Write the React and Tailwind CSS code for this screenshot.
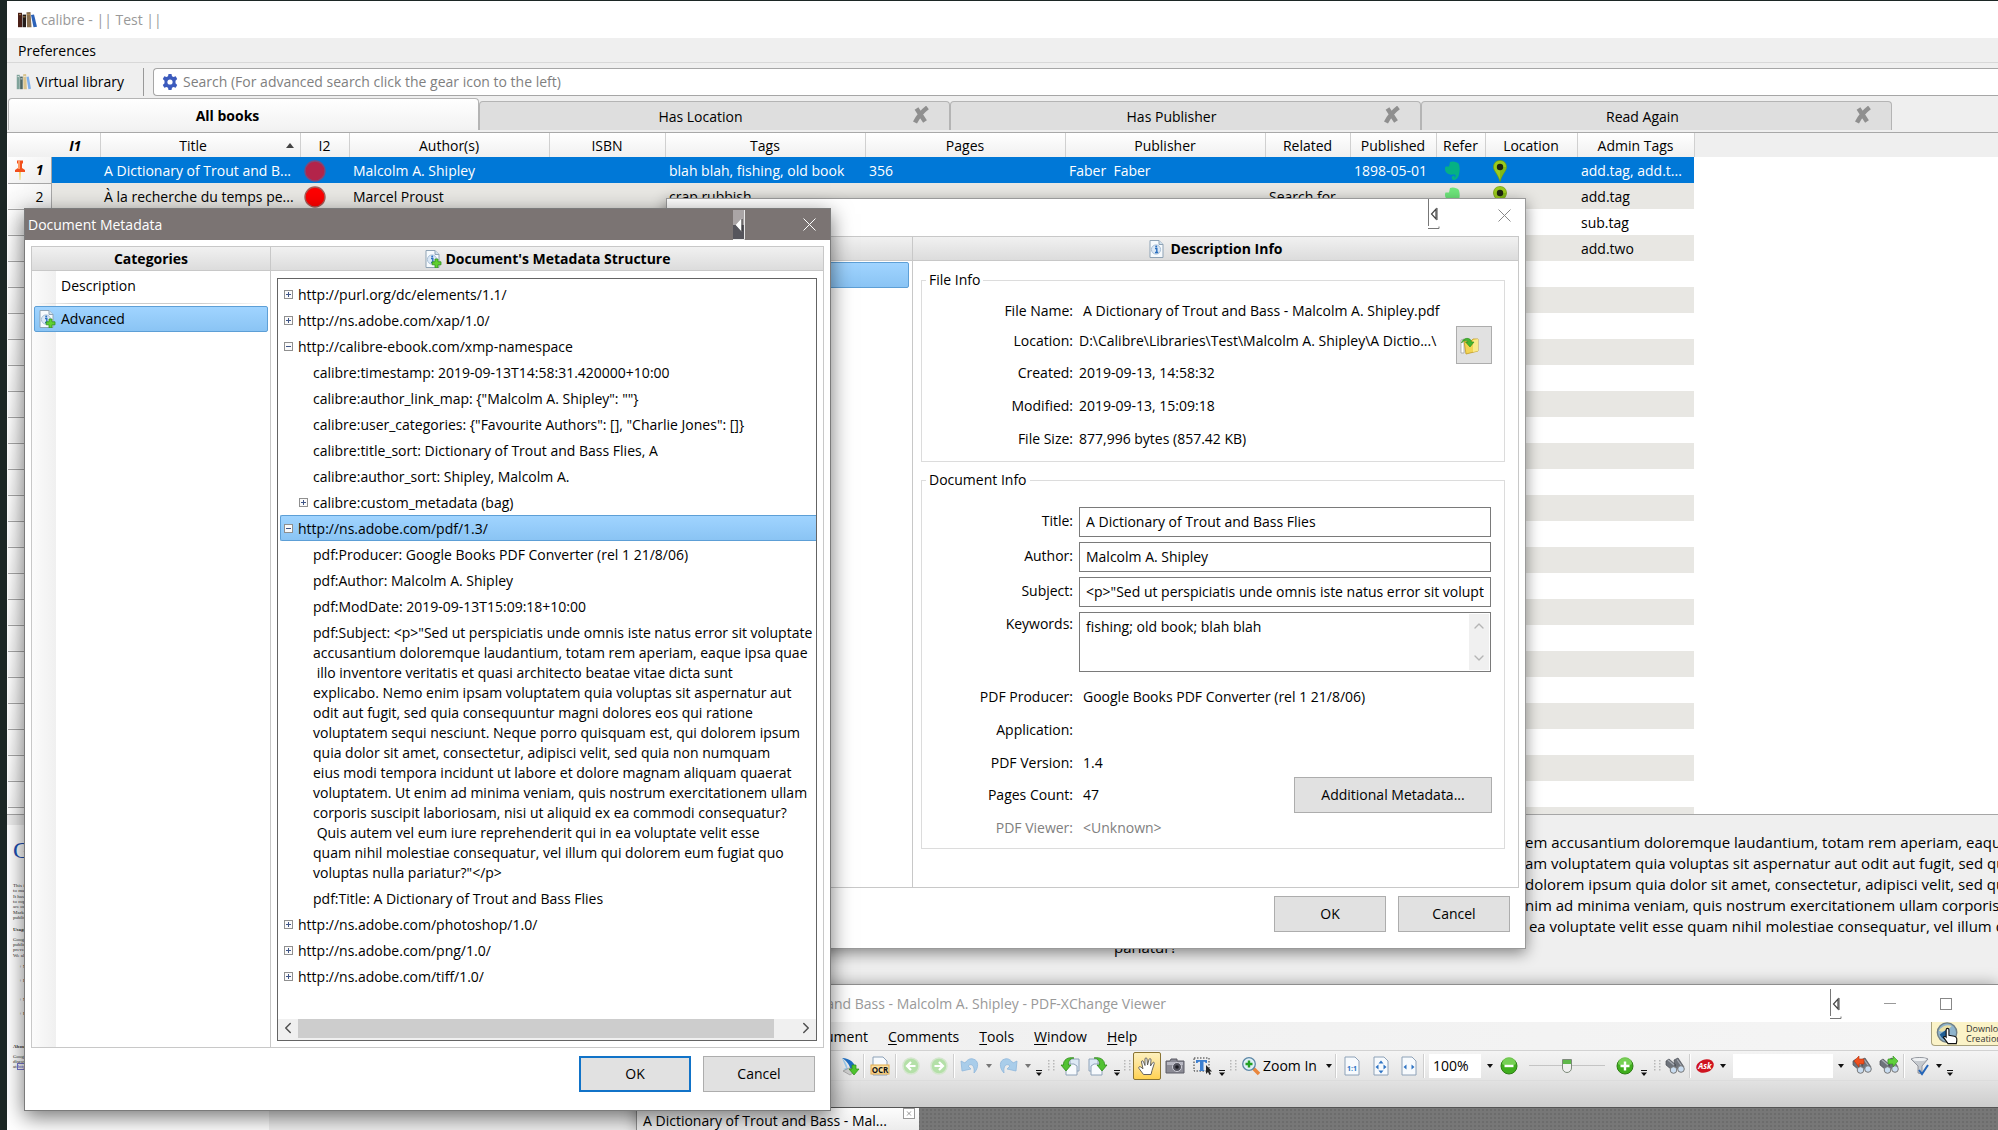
import React, { useState } from 'react'
import clsx from 'clsx'
import { ChevronLeft, ChevronRight, ChevronUp, ChevronDown } from 'lucide-react'

const COLUMNS = [
  { key: 'i2', label: 'I2', width: 49 },
  { key: 'authors', label: 'Author(s)', width: 200 },
  { key: 'isbn', label: 'ISBN', width: 116 },
  { key: 'tags', label: 'Tags', width: 200 },
  { key: 'pages', label: 'Pages', width: 200 },
  { key: 'publisher', label: 'Publisher', width: 200 },
  { key: 'related', label: 'Related', width: 85 },
  { key: 'published', label: 'Published', width: 86 },
  { key: 'refer', label: 'Refer', width: 49 },
  { key: 'location', label: 'Location', width: 92 },
  { key: 'admin', label: 'Admin Tags', width: 117 },
]

const BOOKS = [
  {
    title: 'A Dictionary of Trout and B...',
    i2: <Dot dim />,
    authors: 'Malcolm A. Shipley',
    tags: 'blah blah, fishing, old book',
    pages: '356',
    publisher: 'Faber  Faber',
    published: '1898-05-01',
    refer: <Elephant color="#05b184" />,
    location: <Pin />,
    admin: 'add.tag, add.t...',
  },
  {
    title: 'À la recherche du temps pe...',
    i2: <Dot />,
    authors: 'Marcel Proust',
    tags: 'crap,rubbish',
    related: 'Search for',
    refer: <Elephant color="#6fe87c" />,
    location: <Pin />,
    admin: 'add.tag',
  },
  { admin: 'sub.tag' },
  { admin: 'add.two' },
  ...Array.from({ length: 22 }, () => ({})),
]

const TREE = [
  { text: 'http://purl.org/dc/elements/1.1/', box: '+' },
  { text: 'http://ns.adobe.com/xap/1.0/', box: '+' },
  { text: 'http://calibre-ebook.com/xmp-namespace', box: '-' },
  { text: 'calibre:timestamp: 2019-09-13T14:58:31.420000+10:00', child: true },
  { text: 'calibre:author_link_map: {"Malcolm A. Shipley": ""}', child: true },
  { text: 'calibre:user_categories: {"Favourite Authors": [], "Charlie Jones": []}', child: true },
  { text: 'calibre:title_sort: Dictionary of Trout and Bass Flies, A', child: true },
  { text: 'calibre:author_sort: Shipley, Malcolm A.', child: true },
  { text: 'calibre:custom_metadata (bag)', child: true, box: '+' },
  { text: 'http://ns.adobe.com/pdf/1.3/', box: '-' },
  { text: 'pdf:Producer: Google Books PDF Converter (rel 1 21/8/06)', child: true },
  { text: 'pdf:Author: Malcolm A. Shipley', child: true },
  { text: 'pdf:ModDate: 2019-09-13T15:09:18+10:00', child: true },
  {
    child: true,
    text: [
      'pdf:Subject: <p>"Sed ut perspiciatis unde omnis iste natus error sit voluptate',
      'accusantium doloremque laudantium, totam rem aperiam, eaque ipsa quae',
      ' illo inventore veritatis et quasi architecto beatae vitae dicta sunt',
      'explicabo. Nemo enim ipsam voluptatem quia voluptas sit aspernatur aut',
      'odit aut fugit, sed quia consequuntur magni dolores eos qui ratione',
      'voluptatem sequi nesciunt. Neque porro quisquam est, qui dolorem ipsum',
      'quia dolor sit amet, consectetur, adipisci velit, sed quia non numquam',
      'eius modi tempora incidunt ut labore et dolore magnam aliquam quaerat',
      'voluptatem. Ut enim ad minima veniam, quis nostrum exercitationem ullam',
      'corporis suscipit laboriosam, nisi ut aliquid ex ea commodi consequatur?',
      ' Quis autem vel eum iure reprehenderit qui in ea voluptate velit esse',
      'quam nihil molestiae consequatur, vel illum qui dolorem eum fugiat quo',
      'voluptas nulla pariatur?"</p>',
    ].join('\n'),
  },
  { text: 'pdf:Title: A Dictionary of Trout and Bass Flies', child: true },
  { text: 'http://ns.adobe.com/photoshop/1.0/', box: '+' },
  { text: 'http://ns.adobe.com/png/1.0/', box: '+' },
  { text: 'http://ns.adobe.com/tiff/1.0/', box: '+' },
]

// [text ending at the fold, text after it]
const COMMENT_LINES = [
  ['error sit voluptat', 'em accusantium doloremque laudantium, totam rem aperiam, eaque ipsa'],
  ['Nemo enim ips', 'am voluptatem quia voluptas sit aspernatur aut odit aut fugit, sed quia'],
  ['est, qui ', 'dolorem ipsum quia dolor sit amet, consectetur, adipisci velit, sed quia'],
  ['Ut e', 'nim ad minima veniam, quis nostrum exercitationem ullam corporis'],
  ['reprehenderit qui in', ' ea voluptate velit esse quam nihil molestiae consequatur, vel illum qui'],
]

/* ---------- icons ---------- */

function Dot({ dim }) {
  return (
    <svg viewBox="0 0 22 22" className="h-[22px] w-[22px]">
      <circle cx="11" cy="11" r="10" fill={dim ? '#b3244a' : '#fe0000'} stroke={dim ? '#7a4a7c' : '#a85a55'} strokeWidth="1.4" />
    </svg>
  )
}

function Elephant({ color }) {
  return (
    <svg viewBox="-3 0 20 20" className="h-5 w-[22px]">
      <path d="M6 1c3-1.500 7 0 8.500 1.500 1.500 3 1.500 7 .5 11-1 4-3 5.500-5.500 5.500-2.500-1-2.500-4.500 1-4.500v2c2-1 1-3 0-3-2 0-4 .8-6-.5C2 12 0 9 1.500 5.500H5z" fill={color} />
    </svg>
  )
}

function Pin() {
  return (
    <svg viewBox="-4 0 22 22" className="h-[22px] w-[22px]">
      <path d="M7 .5C3 .5.5 3.300.5 7 .5 11 5 14 7 21.500 9 14 13.500 11 13.500 7 13.500 3.300 11 .5 7 .5z" fill="#9ccb1c" stroke="#6f9a10" strokeWidth=".7" />
      <path d="M7 21C9 14 13 11 13 7H7z" fill="#6fae12" opacity=".6" />
      <circle cx="7" cy="7" r="3.200" fill="#1f2610" />
    </svg>
  )
}

function PushPin() {
  return (
    <svg viewBox="0 0 12 20" className="h-5 w-3">
      <path d="M5 12h2l-.6 8h-.8z" fill="#f3d76a" />
      <path d="M3 .5h6V3L8 4v4l3 2v2H1v-2l3-2V4L3 3z" fill="#f2501c" />
      <path d="M4 1h2v8H4z" fill="#ff9a63" />
    </svg>
  )
}

function Books({ light }) {
  return (
    <svg viewBox="0 0 20 20" className={light ? 'h-[18px] w-[15px]' : 'h-[18px] w-5'} preserveAspectRatio="none">
      <path d="M1 2h4v16H1z" fill={light ? '#7fa39b' : '#4a2018'} />
      <path d="M5.500 4h3.500v14H5.500z" fill={light ? '#4d6663' : '#241c1a'} />
      <path d="M9.500 1.500l4-.5 1 17H10z" fill={light ? '#d9c48e' : '#8b7150'} />
      <path d="M14 4.500l3-.5 3 13.500-3.500.5z" fill={light ? '#7fb0ec' : '#2c62b8'} />
      <path d="M2 4h2M6 6.500h2.500M10 4h3" stroke={light ? '#eee' : '#b08a4c'} strokeWidth="1" />
    </svg>
  )
}

function Gear() {
  return (
    <svg viewBox="0 0 16 16" className="h-4 w-4">
      <path d="M6.500 0h3l.5 2.200 1.500.8 2.200-.8L15.200 5l-1.700 1.700v2.600l1.700 1.700-1.500 2.800-2.200-.8-1.500.8-.5 2.200h-3L6 13.800 4.500 13l-2.200.8L.8 11l1.700-1.700V6.700L.8 5l1.500-2.800 2.200.8L6 2.200z" fill="#3c5bbd" />
      <circle cx="8" cy="8" r="2.600" fill="#fff" />
    </svg>
  )
}

function InfoDoc({ plus }) {
  return (
    <svg viewBox="0 0 18 18" className="h-[18px] w-[18px] shrink-0">
      <path d="M2 .5h9L15 4.500v13H2z" fill="#f6fafd" stroke="#8fa3b5" />
      <path d="M11 .5v4h4" fill="#cfe0ee" stroke="#8fa3b5" />
      <circle cx="8" cy="9.500" r="4.600" fill="#dbe8f5" stroke="#a9bfd6" />
      <path d="M7 8.500h1.800v4M7 12.500h3.200" stroke="#2a6fc0" strokeWidth="1.400" fill="none" />
      <circle cx="8.200" cy="6.600" r="1" fill="#2a6fc0" />
      {plus && <path d="M11 9h3v2.800h3v3h-3v3h-3v-3H8.200v-3H11z" fill="#5fd02f" stroke="#2f8f1c" strokeWidth=".8" />}
    </svg>
  )
}

function TabCross() {
  return (
    <svg viewBox="0 0 18 18" className="h-[18px] w-[18px]" fill="none" stroke="#8f8f8f" strokeWidth="4.500">
      <path d="M4.500 2.500l8.500 13M15.500 1.500Q8 7 3 16.500" />
    </svg>
  )
}

function Cross({ className }) {
  return (
    <svg viewBox="0 0 13 13" className={clsx('h-[13px] w-[13px]', className)}>
      <path d="M.5.5l12 12M12.500.5l-12 12" stroke="currentColor" fill="none" />
    </svg>
  )
}

function SideHandle({ dark }) {
  return (
    <svg viewBox="0 0 12 30" className="h-[30px] w-3">
      {dark && <path d="M0 0h12v15H0z" fill="#aaa5a6" />}
      {dark && <path d="M0 15h12v15H0z" fill="#56555c" />}
      {dark ? (
        <path d="M11.500 0v29.500H0" stroke="#e8e8e8" fill="none" />
      ) : (
        <path d="M.5 0v27M0 29.500h11v-2" stroke="#777" fill="none" />
      )}
      <path d="M8 10v10l-4.500-5z" fill={dark ? '#fff' : 'none'} stroke={dark ? '#fff' : '#444'} strokeWidth="1.200" />
      <path d="M9 9v12" stroke={dark ? '#333' : '#444'} />
    </svg>
  )
}

function FolderUp() {
  return (
    <svg viewBox="0 0 20 20" className="h-5 w-5">
      <path d="M1 5l3-1v14H1z" fill="#fff" stroke="#999" strokeWidth=".7" />
      <path d="M4 6h7l2-2h5v12l-12 3z" fill="#f3d453" stroke="#c09a22" strokeWidth=".8" />
      <path d="M13 5l5-1v12l-5 1z" fill="#faea8a" />
      <path d="M1.500 8C3 2 11 2 11.500 7H14l-4 5-4.500-5H8C7 5 4 5 1.500 8z" fill="#45b52f" stroke="#2a8a1c" strokeWidth=".6" />
    </svg>
  )
}

function Tool({ children }) {
  return (
    <svg viewBox="0 0 20 20" className="h-5 w-5 shrink-0" fill="none">
      {children}
    </svg>
  )
}

const ScanIcon = () => (
  <Tool>
    <path d="M2 2c8 0 13 5 14 11l-5 3C10 9 7 5 2 2z" fill="#1f6fc4" />
    <path d="M2 2c3 3 6 8 6 13l-5-2 3-1z" fill="#9ccdf0" />
    <path d="M3 15l6-3 8 2-7 5z" fill="#cfcfcf" stroke="#888" strokeWidth=".6" />
    <path d="M12 9h4v4h3l-5 6-5-6h3z" fill="#4fc52e" stroke="#2b8d18" strokeWidth=".7" />
  </Tool>
)

const PageShape = () => <path d="M3 1h10l4 4v14H3z" fill="#f7fafd" stroke="#8ea2b8" />

const OcrIcon = () => (
  <Tool>
    <PageShape />
    <rect x="1" y="9" width="18" height="9" fill="#fbdfa0" stroke="#e0a94a" />
    <text x="10" y="16.500" fontSize="8" fontWeight="700" textAnchor="middle" fill="#111">OCR</text>
  </Tool>
)

const RoundArrow = ({ flip }) => (
  <Tool>
    <g transform={flip ? 'matrix(-1 0 0 1 20 0)' : undefined}>
      <circle cx="10" cy="10" r="8" fill="#b4e0a8" stroke="#d4e6ce" strokeWidth="1.500" />
      <path d="M14.500 10H6.500M10 6l-4 4 4 4" stroke="#fff" strokeWidth="2.200" />
    </g>
  </Tool>
)

const CurlArrow = ({ flip }) => (
  <Tool>
    <g transform={flip ? 'matrix(-1 0 0 1 20 0)' : undefined}>
      <path d="M1 5l1 10 9-2-3-3c3-3 7-1 6 7 5-5 5-13-1-14C10 2 7 4 5 7z" fill="#a9cdea" stroke="#8fb8dc" strokeWidth=".8" />
    </g>
  </Tool>
)

const RotateIcon = ({ flip }) => (
  <Tool>
    <g transform={flip ? 'matrix(-1 0 0 1 20 0)' : undefined}>
      <path d="M10 3h9v12h-9z" fill="#dde9f5" stroke="#8ea2b8" />
      <path d="M6 8h8l3 2v9H6z" fill="#f7fafd" stroke="#8ea2b8" />
      <path d="M1 9h2.500C3 4 8 .5 14 2c-4 .5-6 3-5.500 7H11l-5 6z" fill="#52c232" stroke="#2d8a19" strokeWidth=".8" />
    </g>
  </Tool>
)

const HandShape = () => (
  <path d="M6.500 18.500L2 12.500c-1-1.500.8-2.400 1.800-1.500L6 12.800 4.500 6c-.2-1.500 1.600-1.700 2-.3L8 9.500V3c0-1.500 2-1.500 2 0l.5 6L12 3.500c.4-1.400 2.200-1 2 .5L13.500 10l2-3.200c.8-1.200 2.200-.4 1.700.9L15 14.500l-1 4z" fill="#fff" stroke="#555" strokeWidth=".9" />
)

const CameraIcon = () => (
  <Tool>
    <path d="M1 5h4l1-2h6v2h7v12H1z" fill="#8b8b95" stroke="#5d5d66" />
    <path d="M2 6h16v3H2z" fill="#b8b8c2" />
    <circle cx="12" cy="11" r="4.500" fill="#55555f" stroke="#d0d0d8" />
    <circle cx="12" cy="11" r="1.800" fill="#1c1c22" />
  </Tool>
)

const TextSelectIcon = () => (
  <Tool>
    <path d="M1 2h15v13H1z" stroke="#333" strokeDasharray="1.500 1.500" />
    <path d="M3 4h11v3h-1.500c0-1-.5-1.300-2-1.300V14l1.500 1H6l1-1V5.700c-1.500 0-2 .3-2.500 1.300H3z" fill="#3c7fd0" />
    <path d="M13 9v9l2-2 1.500 3 1.500-1-1.500-2.500H19z" fill="#222" />
  </Tool>
)

const MagnifierIcon = () => (
  <Tool>
    <path d="M12 12l6 6" stroke="#e9863c" strokeWidth="3.500" />
    <circle cx="8" cy="8" r="6.300" fill="#dff0f7" stroke="#5c87a6" strokeWidth="1.300" />
    <path d="M8 4.500v7M4.500 8h7" stroke="#22a024" strokeWidth="2.400" />
  </Tool>
)

const FitIcon = ({ kind }) => (
  <Tool>
    <PageShape />
    {kind === 'actual' ? (
      <text x="10" y="15" fontSize="7" fontWeight="700" textAnchor="middle" fill="#2f74c4">1:1</text>
    ) : (
      <path d="M7.500 8.500v5l-3-2.500zM12.500 8.500v5l3-2.500z" fill="#2f74c4" />
    )}
    {kind === 'page' && <path d="M7.500 7.500h5L10 4.500zM7.500 14.500h5l-2.500 3z" fill="#2f74c4" />}
  </Tool>
)

const Ball = ({ plus }) => (
  <Tool>
    <circle cx="10" cy="10" r="8" fill="#3fae1d" stroke="#2c7d14" />
    <path d="M3 8a7 7 0 0114 0c-4 2-10 2-14 0z" fill="#8ee06c" opacity=".7" />
    <path d={plus ? 'M10 5.500v9M5.500 10h9' : 'M5.500 10h9'} stroke="#fff" strokeWidth="2.400" />
  </Tool>
)

const Binoculars = ({ arrow }) => (
  <Tool>
    <path d="M1 5l3-2 7 6-4 5-6-5zM9 4l4-2 6 9-4 4-5-5z" fill="#6e737b" stroke="#4a4e55" strokeWidth=".7" />
    <path d="M3 4l6 5M12 3.500l5 7" stroke="#a9aeb6" strokeWidth="1.200" />
    <circle cx="8.500" cy="14" r="3.300" fill="#c9dcf0" stroke="#777" />
    <circle cx="16" cy="13" r="3.300" fill="#c9dcf0" stroke="#777" />
    {arrow === 'back' && <path d="M2 5l5-5v3h5v5H7v3z" fill="#f0501e" stroke="#b3310c" strokeWidth=".6" />}
    {arrow === 'next' && <path d="M19 5l-5-5v3H9v5h5v3z" fill="#5fd03c" stroke="#2f8f1c" strokeWidth=".6" />}
  </Tool>
)

const AskIcon = () => (
  <Tool>
    <ellipse cx="10" cy="10" rx="9" ry="6.500" fill="#cf1420" transform="rotate(-20 10 10)" />
    <text x="10" y="13" fontSize="8" fontWeight="700" fontStyle="italic" textAnchor="middle" fill="#fff">Ask</text>
  </Tool>
)

const FunnelIcon = () => (
  <Tool>
    <path d="M1 3c4-2 13-2 17 0l-6 7v8l-4-1v-7z" fill="#c5c9ce" stroke="#7d828a" strokeWidth=".8" />
    <ellipse cx="9.500" cy="3.500" rx="7" ry="1.600" fill="#eef0f2" />
    <path d="M9 14l3 4 6-9" stroke="#2465b8" strokeWidth="2" />
  </Tool>
)

/* ---------- small shared parts ---------- */

function DialogButton({ primary, children }) {
  return (
    <button
      type="button"
      className={clsx(
        'h-9 w-28 bg-[#e1e1e1] text-sm',
        primary ? 'border-2 border-[#1173c8]' : 'border border-[#adadad]'
      )}
    >
      {children}
    </button>
  )
}

function PaneHeader({ className, children }) {
  return (
    <div className={clsx('flex h-6 shrink-0 items-center justify-center gap-1 border-b border-[#c8c8c8] bg-linear-to-b from-[#f1f1f1] to-[#dcdcdc] text-sm font-bold', className)}>
      {children}
    </div>
  )
}

/* ---------- calibre main window ---------- */

function LibraryTabs() {
  const [active, setActive] = useState('All books')
  return (
    <div className="flex h-[34px] items-end border-b border-[#a8a8a8] pb-[2px] pl-px">
      {['All books', 'Has Location', 'Has Publisher', 'Read Again'].map(name => (
        <div
          key={name}
          className={clsx(
            'flex w-[471px] shrink-0 items-center rounded-t-sm border border-b-0 border-[#b4b4b4] pt-[2px] pl-4',
            name === active ? 'h-8 bg-linear-to-b from-white to-[#f2f2f2] pr-12 font-bold' : 'h-[29px] bg-[#dedede] pr-3'
          )}
        >
          <button type="button" className="flex-1" onClick={() => setActive(name)}>{name}</button>
          {name !== active && (
            <button type="button" aria-label={`Close ${name}`} className="flex w-8 justify-center pb-1"><TabCross /></button>
          )}
        </div>
      ))}
    </div>
  )
}

function BookTable() {
  return (
    <table className="w-[1686px] table-fixed border-collapse">
      <colgroup>
        <col className="w-[43px]" />
        <col className="w-[49px]" />
        <col className="w-[200px]" />
        {COLUMNS.map(c => <col key={c.key} style={{ width: c.width }} />)}
      </colgroup>
      <thead>
        <tr className="h-6 bg-linear-to-b from-white to-[#f0f0f0] [&>th]:p-0 [&>th]:pt-px [&>th]:font-normal">
          <th />
          <th className="border-r border-[#d0d0d0]"><span className="font-bold italic">I1</span></th>
          <th className="border-r border-[#d0d0d0]">
            <div className="flex items-center pr-1.5">
              <span className="flex-1">Title</span>
              <svg viewBox="0 0 8 5" className="h-[5px] w-2"><path d="M0 5l4-5 4 5z" fill="#444" /></svg>
            </div>
          </th>
          {COLUMNS.map(c => <th key={c.key} className="border-r border-[#d0d0d0]">{c.label}</th>)}
        </tr>
      </thead>
      <tbody>
        {BOOKS.map((book, i) => (
          <tr
            key={i}
            className={clsx(
              'h-[26px] whitespace-pre [&>td]:overflow-hidden [&>td]:p-0 [&>td]:pt-px [&>td]:pl-1',
              i === 0 ? 'bg-[#0078d7] text-white' : i % 2 ? 'bg-[#e8e7e3]' : 'bg-white'
            )}
          >
            <th className="border-r border-b border-[#a6a6a6] bg-linear-to-br from-white to-[#ececec] p-0 font-normal text-black">
              <div className="flex h-[25px] items-center justify-between pt-px pr-[7px] pl-1.5">
                <span>{i === 0 && <PushPin />}</span>
                {i < 2 && <span className={i === 0 ? 'font-bold italic' : ''}>{i + 1}</span>}
              </div>
            </th>
            <td />
            <td>{book.title}</td>
            {COLUMNS.map(c => <td key={c.key}>{book[c.key]}</td>)}
          </tr>
        ))}
      </tbody>
    </table>
  )
}

function CoverPage() {
  return (
    <div className="w-[262px] shrink-0 bg-[#ececec] pt-[10px]">
      <div className="h-full bg-white pt-4 pl-1.5 font-[Liberation_Serif,serif] text-[5px] leading-[5px] whitespace-pre text-[#333]">
        <div className="pb-6 text-[24px] leading-[18px] text-[#1d4fb0]">Google</div>
        <p>{'This is a digital copy of a book\nto make the world’s books'}</p>
        <p className="pt-px">{'It has survived long enough\nto copyright or whose legal\nare our gateways to the past'}</p>
        <p className="pt-px">{'Marks, notations and other\npublisher to a library'}</p>
        <p className="pt-[7px] font-bold">Usage guidelines</p>
        <p className="pt-[5px]">{'Google is proud to partner\npublic and we are merely\nprevent abuse by commercial'}</p>
        <p className="pt-px">We also ask that you:</p>
        <ul className="space-y-[9px] pt-[6px] pl-1.5">
          <li>+ Make non-commercial use</li>
          <li>+ Refrain from automated</li>
          <li className="pt-[5px]">+ Maintain attribution</li>
          <li>+ Keep it legal</li>
        </ul>
        <p className="pt-7 font-bold">About Google Book Search</p>
        <p className="pt-[5px]">{'Google’s mission is to organize\ndiscover the world’s books\nat '}<a href="#books" className="outline outline-[#7a78d0] text-[#4a48c0]">http://books.google.com/</a></p>
      </div>
    </div>
  )
}

function CommentsPane() {
  return (
    <div className="min-w-0 flex-1 overflow-hidden bg-[#efefef] pt-[17px] pl-[845px] text-[15px] leading-[21px] whitespace-pre">
      {COMMENT_LINES.map(([before, after]) => (
        <div key={after} className="flex">
          <span className="w-[411px] shrink-0 text-right">{before}</span>
          <span>{after}</span>
        </div>
      ))}
      <div>pariatur?</div>
    </div>
  )
}

function CalibreWindow() {
  return (
    <section className="absolute inset-0 top-px left-[7px] flex flex-col overflow-hidden bg-[#efefef]">
      <header className="flex h-[37px] shrink-0 items-center gap-1 bg-white pl-2.5 text-[#999]">
        <Books />
        <span>calibre - || Test ||</span>
      </header>
      <nav className="flex h-[25px] shrink-0 items-center border-b border-[#d8d8d8] pt-[2px] pl-[11px]">
        <button type="button">Preferences</button>
      </nav>
      <div className="flex h-9 shrink-0 items-center pt-px pl-[9px]">
        <button type="button" className="flex w-[127px] items-center gap-[5px]"><Books light />Virtual library</button>
        <div className="h-7 w-[10px] border-l border-[#999]" />
        <label className="flex h-7 flex-1 items-center gap-[5px] rounded-l-sm border border-r-0 border-[#a6a6a6] bg-white pl-2">
          <Gear />
          <input
            aria-label="Search"
            placeholder="Search (For advanced search click the gear icon to the left)"
            className="flex-1 outline-none placeholder:text-[#7f7f7f]"
          />
        </label>
      </div>
      <LibraryTabs />
      <div className="min-h-0 flex-1 overflow-hidden bg-white pl-px">
        <div className="h-full bg-[linear-gradient(#efefef_24px,white_24px)]"><BookTable /></div>
      </div>
      <div className="flex h-[316px] shrink-0 border-t border-[#a6a6a6]">
        <CoverPage />
        <CommentsPane />
      </div>
    </section>
  )
}

/* ---------- PDF viewer window ---------- */

const Slot = ({ w, label, children }) => (
  <button type="button" aria-label={label} className="flex shrink-0 justify-center" style={{ width: w }}>{children}</button>
)

const Arrow = ({ w, label = 'More options', faded }) => (
  <Slot w={w} label={label}>
    <svg viewBox="0 0 6 4" className="h-1 w-1.5"><path d="M0 0h6L3 4z" fill={faded ? '#777' : '#111'} /></svg>
  </Slot>
)

const Overflow = ({ w }) => (
  <div className="flex h-5 shrink-0 items-end justify-center" style={{ width: w }}>
    <svg viewBox="0 0 6 6" className="h-1.5 w-1.5"><path d="M0 0h6v1H0zM0 2.500h6L3 6z" fill="#111" /></svg>
  </div>
)

const Grip = ({ w }) => (
  <div className="flex shrink-0 justify-center" style={{ width: w }}>
    <svg viewBox="0 0 7 12" className="h-3 w-[7px]">
      {[0, 3, 6, 9].map(y => <path key={y} d={`M0 ${y}h1.500v1.500H0zM5 ${y}h1.500v1.500H5z`} fill="#b8b8b8" />)}
    </svg>
  </div>
)

const Divider = () => <div className="h-6 w-[2px] shrink-0 border-l border-[#cfcfcf] bg-white" />

function ViewerToolbar() {
  return (
    <div className="flex h-[31px] shrink-0 items-center border-y border-[#dcdcdc] border-t-[#d2d2d2] bg-linear-to-b from-[#f4f4f4] to-[#e4e4e4] pl-[200px]">
      <Slot w={26} label="Scan"><ScanIcon /></Slot>
      <Divider />
      <Slot w={30} label="OCR"><OcrIcon /></Slot>
      <Divider />
      <Slot w={28} label="Back"><RoundArrow /></Slot>
      <Slot w={28} label="Forward"><RoundArrow flip /></Slot>
      <Divider />
      <Slot w={30} label="Undo"><CurlArrow /></Slot>
      <Arrow w={8} faded />
      <Slot w={30} label="Redo"><CurlArrow flip /></Slot>
      <Arrow w={10} faded />
      <Overflow w={12} />
      <Grip w={12} />
      <Slot w={26} label="Rotate left"><RotateIcon /></Slot>
      <Slot w={30} label="Rotate right"><RotateIcon flip /></Slot>
      <Overflow w={8} />
      <Grip w={12} />
      <button type="button" aria-label="Hand tool" className="flex h-7 w-7 shrink-0 items-center justify-center rounded-xs border border-[#8a7433] bg-linear-to-b from-[#fdf0bd] to-[#ffd24f]">
        <Tool><HandShape /></Tool>
      </button>
      <Slot w={28} label="Snapshot"><CameraIcon /></Slot>
      <Slot w={28} label="Select text"><TextSelectIcon /></Slot>
      <Overflow w={10} />
      <Grip w={12} />
      <button type="button" className="flex w-[84px] shrink-0 items-center gap-[2px] pl-[2px] whitespace-nowrap"><MagnifierIcon />Zoom In</button>
      <Arrow w={12} />
      <Divider />
      <Slot w={30} label="Actual size"><FitIcon kind="actual" /></Slot>
      <Slot w={28} label="Fit page"><FitIcon kind="page" /></Slot>
      <Slot w={28} label="Fit width"><FitIcon kind="width" /></Slot>
      <Divider />
      <input aria-label="Zoom" defaultValue="100%" className="ml-1 h-6 w-[52px] shrink-0 bg-white pl-1" />
      <Arrow w={18} />
      <Slot w={20} label="Zoom out"><Ball /></Slot>
      <input
        type="range"
        aria-label="Zoom level"
        className="mx-2.5 h-4 w-[76px] shrink-0 appearance-none bg-[linear-gradient(#c4c4c4,#c4c4c4)] bg-[length:100%_1px] bg-center bg-no-repeat [&::-webkit-slider-thumb]:h-[14px] [&::-webkit-slider-thumb]:w-[10px] [&::-webkit-slider-thumb]:appearance-none [&::-webkit-slider-thumb]:rounded-b-full [&::-webkit-slider-thumb]:border [&::-webkit-slider-thumb]:border-[#7d8a7a] [&::-webkit-slider-thumb]:bg-[linear-gradient(#5fb84a_4px,#f0f0f0_4px)]"
      />
      <Slot w={20} label="Zoom in"><Ball plus /></Slot>
      <Overflow w={18} />
      <Grip w={8} />
      <Slot w={28} label="Find"><Binoculars /></Slot>
      <Divider />
      <Slot w={28} label="Ask search"><AskIcon /></Slot>
      <Arrow w={8} />
      <input aria-label="Find text" className="ml-1.5 h-6 w-[100px] shrink-0 bg-white" />
      <Arrow w={16} />
      <Slot w={26} label="Find previous"><Binoculars arrow="back" /></Slot>
      <Slot w={28} label="Find next"><Binoculars arrow="next" /></Slot>
      <Divider />
      <Slot w={30} label="Filter"><FunnelIcon /></Slot>
      <Arrow w={8} />
      <Overflow w={14} />
    </div>
  )
}

function ViewerWindow() {
  return (
    <section className="absolute right-0 bottom-0 left-[636px] flex h-[146px] flex-col overflow-hidden border-t border-l border-[#8e8e8e] bg-[#e4e4e4] shadow-[0_0_14px_rgba(0,0,0,0.35)]">
      <header className="flex h-[37px] shrink-0 items-center bg-white text-[#999]">
        <span className="w-[529px] text-right whitespace-nowrap">A Dictionary of Trout and Bass - Malcolm A. Shipley - PDF-XChange Viewer</span>
        <div className="ml-auto flex items-center">
          <SideHandle />
          <button type="button" aria-label="Minimize" className="ml-[42px] flex h-6 w-6 items-center"><span className="h-px w-3 bg-[#999]" /></button>
          <button type="button" aria-label="Maximize" className="ml-8 h-3 w-3 border border-[#888]" />
          <span className="w-[46px]" />
        </div>
      </header>
      <nav className="flex h-7 shrink-0 items-center gap-5 bg-linear-to-r from-[#efefef] to-[#f5f5f5]">
        <button type="button" className="w-[231px] pt-px text-right"><span className="underline">D</span>ocument</button>
        {['Comments', 'Tools', 'Window', 'Help'].map(item => (
          <button key={item} type="button" className="pt-px"><span className="underline underline-offset-2">{item[0]}</span>{item.slice(1)}</button>
        ))}
        <a href="#download" className="ml-auto flex h-6 w-[67px] items-center gap-1.5 self-start overflow-hidden rounded-bl border-b border-l border-[#a9a27e] bg-[#fbf3c8] pl-1 text-[9px] leading-[10px] whitespace-nowrap text-[#333]">
          <svg viewBox="0 0 26 26" className="h-[25px] w-6 shrink-0">
            <circle cx="12" cy="12" r="10.500" fill="#8fb4cc" stroke="#6f7f86" strokeWidth="1.500" />
            <path d="M3 10c4-6 10-7 14-5l-5 5-6 1z" fill="#e9dfa6" />
            <path d="M4 14l8-6 2 12c-5 0-8-2-10-6z" fill="#1f5d93" />
            <path d="M11 9c0-2 3-2 3 0v6l6 1c3 1 3 3 2 8h-9l-5-7c1-1 2-1 3 0z" fill="#fff" stroke="#111" strokeWidth="1.200" />
          </svg>
          <span>Download<br />Creation</span>
        </a>
      </nav>
      <ViewerToolbar />
      <div className="h-[27px] shrink-0 border-b border-[#555] bg-linear-to-b from-[#e2e2e2] to-[#cdcdcd]" />
      <div className="flex flex-1 bg-[#777] bg-[radial-gradient(#6c6c6c_1px,transparent_1px)] bg-[length:4px_4px]">
        <div className="flex w-[282px] items-start bg-linear-to-b from-[#fdfdfd] to-[#ececec] pl-1.5">
          <span className="flex-1 pt-[5px] leading-4 whitespace-nowrap">A Dictionary of Trout and Bass - Mal...</span>
          <button type="button" aria-label="Close document" className="mr-1 flex h-[11px] w-3 items-center justify-center border border-[#999] bg-white text-black">
            <Cross className="scale-50" />
          </button>
        </div>
      </div>
    </section>
  )
}

/* ---------- description dialog ---------- */

function Group({ title, className, children }) {
  return (
    <fieldset className={clsx('border border-[#dcdcdc]', className)}>
      <legend className="ml-1 h-5 px-[3px] leading-5">{title}</legend>
      {children}
    </fieldset>
  )
}

function InfoRow({ label, children, className }) {
  return (
    <div className={clsx('flex items-center gap-1.5 pr-3', className)}>
      <span className="w-[151px] shrink-0 text-right">{label}</span>
      {children}
    </div>
  )
}

function TextRow({ id, label, value }) {
  return (
    <div className="flex items-start gap-1.5 pr-[13px]">
      <label htmlFor={id} className="w-[151px] shrink-0 pt-1 text-right">{label}</label>
      <input id={id} defaultValue={value} className="h-[30px] min-w-0 flex-1 border border-[#7a7a7a] bg-white px-1.5 pb-px" />
    </div>
  )
}

function DescriptionDialog() {
  return (
    <section className="absolute top-[198px] left-[666px] flex h-[751px] w-[860px] flex-col border border-[#9a9a9a] bg-white shadow-[0_4px_14px_rgba(0,0,0,0.45)]">
      <header className="flex h-[37px] shrink-0 items-start justify-end gap-[58px] pr-3.5">
        <SideHandle />
        <button type="button" aria-label="Close" className="pt-2.5 text-[#888]"><Cross /></button>
      </header>
      <div className="mx-1.5 flex flex-1 border border-[#c8c8c8]">
        <aside className="w-[239px] border-r border-[#c8c8c8]">
          <PaneHeader>Categories</PaneHeader>
          <button type="button" className="mx-[2px] mt-px block h-[26px] w-[233px] rounded-xs border border-[#5d9fd6] bg-linear-to-b from-[#a0d4ff] to-[#8ac4f4] pl-6 text-left">Description</button>
        </aside>
        <div className="flex-1">
          <PaneHeader><InfoDoc />Description Info</PaneHeader>
          <div className="space-y-2 pt-[9px] pr-[13px] pl-2">
            <Group title="File Info" className="pb-1.5">
              <div className="pt-1.5">
                <InfoRow label="File Name:" className="h-[30px]">
                  <span className="pl-1">A Dictionary of Trout and Bass - Malcolm A. Shipley.pdf</span>
                </InfoRow>
                <div className="flex h-[30px] items-start gap-1.5 pr-3 leading-[30px]">
                  <span className="w-[151px] shrink-0 text-right">Location:</span>
                  <span className="flex-1 whitespace-nowrap">D:\Calibre\Libraries\Test\Malcolm A. Shipley\A Dictio...\</span>
                  <button type="button" aria-label="Open folder" className="flex h-[38px] w-9 shrink-0 items-center justify-center border border-[#adadad] bg-[#e1e1e1] pr-2"><FolderUp /></button>
                </div>
                <InfoRow label="Created:" className="h-[33px]">2019-09-13, 14:58:32</InfoRow>
                <InfoRow label="Modified:" className="h-[33px]">2019-09-13, 15:09:18</InfoRow>
                <InfoRow label="File Size:" className="h-[33px]">877,996 bytes (857.42 KB)</InfoRow>
              </div>
            </Group>
            <Group title="Document Info" className="pb-1">
              <div className="space-y-[5px] pt-[17px] pb-2">
                <TextRow id="title" label="Title:" value="A Dictionary of Trout and Bass Flies" />
                <TextRow id="author" label="Author:" value="Malcolm A. Shipley" />
                <TextRow id="subject" label="Subject:" value={'<p>"Sed ut perspiciatis unde omnis iste natus error sit volupt'} />
                <div className="flex items-start gap-1.5 pr-[13px]">
                  <label htmlFor="keywords" className="w-[151px] shrink-0 pt-[2px] text-right">Keywords:</label>
                  <div className="flex h-[60px] flex-1 border border-[#7a7a7a] bg-white">
                    <textarea id="keywords" defaultValue="fishing; old book; blah blah" className="flex-1 resize-none overflow-hidden px-1.5 pt-1" />
                    <div className="m-px flex w-5 flex-col items-center justify-between bg-[#f0f0f0] py-1 text-[#b5b5b5]">
                      <ChevronUp size={16} />
                      <ChevronDown size={16} />
                    </div>
                  </div>
                </div>
              </div>
              <InfoRow label="PDF Producer:" className="h-[33px]"><span className="pl-1">Google Books PDF Converter (rel 1 21/8/06)</span></InfoRow>
              <InfoRow label="Application:" className="h-[33px]" />
              <InfoRow label="PDF Version:" className="h-[33px]"><span className="pl-1">1.4</span></InfoRow>
              <InfoRow label="Pages Count:" className="h-8">
                <span className="flex-1 pl-1">47</span>
                <button type="button" className="h-9 w-[198px] border border-[#adadad] bg-[#e1e1e1]">Additional Metadata...</button>
              </InfoRow>
              <InfoRow label="PDF Viewer:" className="h-[33px] text-[#808080]"><span className="pl-1">&lt;Unknown&gt;</span></InfoRow>
            </Group>
          </div>
        </div>
      </div>
      <footer className="flex h-[60px] shrink-0 justify-end gap-3 pt-2 pr-[15px]">
        <DialogButton>OK</DialogButton>
        <DialogButton>Cancel</DialogButton>
      </footer>
    </section>
  )
}

/* ---------- metadata dialog ---------- */

function Expander({ sign }) {
  return (
    <svg viewBox="0 0 9 9" className="h-[9px] w-[9px]">
      <rect x=".5" y=".5" width="8" height="8" fill="#fafafa" stroke="#8f8f8f" />
      <path d={sign === '+' ? 'M2 4.500h5M4.500 2v5' : 'M2 4.500h5'} stroke="#3f5587" />
    </svg>
  )
}

function MetadataTree() {
  const [selected, setSelected] = useState(9)
  return (
    <ul className="flex-1 overflow-hidden pt-[2px] pl-[2px]">
      {TREE.map((node, i) => (
        <li
          key={i}
          onClick={() => setSelected(i)}
          className={clsx(
            'flex items-start border-y border-l pt-[3px] pb-px leading-5 whitespace-pre',
            node.child ? 'pl-[18px]' : 'pl-[3px]',
            i === selected ? 'rounded-l-xs border-[#5d9fd6] bg-linear-to-b from-[#a0d4ff] to-[#8ac4f4]' : 'border-transparent'
          )}
        >
          <span className="flex h-[18px] w-[14px] shrink-0 items-center">{node.box && <Expander sign={node.box} />}</span>
          <span>{node.text}</span>
        </li>
      ))}
    </ul>
  )
}

function MetadataDialog() {
  return (
    <section className="absolute top-[208px] left-6 flex h-[903px] w-[807px] flex-col border border-[#7b7b7b] bg-white shadow-[0_6px_20px_rgba(0,0,0,0.55)]">
      <header className="flex h-[31px] shrink-0 items-center bg-[#7b7473] pr-3.5 pl-[3px] text-white">
        <h2 className="flex-1">Document Metadata</h2>
        <SideHandle dark />
        <button type="button" aria-label="Close" className="ml-[58px]"><Cross /></button>
      </header>
      <div className="mx-1.5 mt-1.5 flex flex-1 border border-[#c8c8c8]">
        <aside className="flex w-[239px] shrink-0 flex-col border-r border-[#c8c8c8]">
          <PaneHeader>Categories</PaneHeader>
          <div className="flex-1 bg-[linear-gradient(to_right,#fbfbfb,#f0f0f0_24px,white_24px)] px-[2px]">
            <button type="button" className="block h-[30px] w-full pl-[27px] text-left">Description</button>
            <div className="h-[5px] border-b border-transparent bg-[linear-gradient(to_right,transparent,#cccccc_20%,#cccccc_70%,transparent)] bg-[length:100%_1px] bg-center bg-no-repeat" />
            <button type="button" className="flex h-[26px] w-full items-center gap-[5px] rounded-xs border border-[#5d9fd6] bg-linear-to-b from-[#a0d4ff] to-[#8ac4f4] pl-[3px]">
              <InfoDoc plus />Advanced
            </button>
          </div>
        </aside>
        <div className="flex min-w-0 flex-1 flex-col">
          <PaneHeader><InfoDoc plus />Document's Metadata Structure</PaneHeader>
          <div className="mx-1.5 mt-[7px] mb-1.5 flex min-h-0 flex-1 flex-col border border-[#646464]">
            <MetadataTree />
            <div className="flex h-[21px] shrink-0 items-start justify-between bg-[#f0f0f0] text-[#505050]">
              <button type="button" aria-label="Scroll left" className="flex w-5 justify-center"><ChevronLeft size={18} /></button>
              <div className="mr-[22px] h-[19px] flex-1 bg-[#cdcdcd]" />
              <button type="button" aria-label="Scroll right" className="flex w-5 justify-center"><ChevronRight size={18} /></button>
            </div>
          </div>
        </div>
      </div>
      <footer className="flex h-[62px] shrink-0 justify-end gap-3 pt-2 pr-[15px]">
        <DialogButton primary>OK</DialogButton>
        <DialogButton>Cancel</DialogButton>
      </footer>
    </section>
  )
}

export default function App() {
  return (
    <main className="relative h-screen w-full overflow-hidden bg-[#1c2725] font-['Open_Sans','Noto_Sans',sans-serif] text-sm text-black">
      <CalibreWindow />
      <ViewerWindow />
      <DescriptionDialog />
      <MetadataDialog />
    </main>
  )
}
